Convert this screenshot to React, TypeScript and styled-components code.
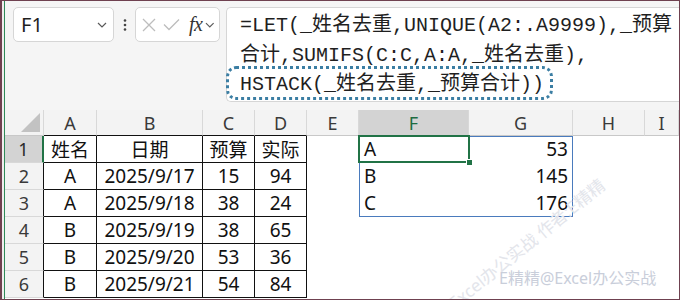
import React from "react";
import styled, { createGlobalStyle } from "styled-components";

const Global = createGlobalStyle`
  html, body { margin: 0; padding: 0; background: #ffffff; }
  body { width: 680px; height: 300px; overflow: hidden; }
`;

const Frame = styled.div`
  position: relative;
  box-sizing: border-box;
  width: 680px;
  height: 300px;
  border: 1px solid #6f4150;
  border-left-width: 2px;
  background: #efeded;
  display: flex;
  overflow: hidden;
`;

const Inner = styled.div`
  margin-left: 2px;
  border-left: 1px solid #2f8a58;
  flex: 1;
  min-width: 0;
  display: flex;
  flex-direction: column;
  background: #ffffff;
`;

const FormulaBar = styled.div`
  box-sizing: border-box;
  height: 109px;
  background: #f5f5f5;
  display: flex;
  align-items: flex-start;
  padding: 6px 0 0 8px;
`;

const Pill = styled.div<{ $w: number }>`
  box-sizing: border-box;
  width: ${(p) => p.$w}px;
  height: 35px;
  background: #ffffff;
  border: 1px solid #d6d6d6;
  border-radius: 5px;
  display: flex;
  align-items: center;
`;

const NameText = styled.span`
  font-family: "Noto Sans", sans-serif;
  font-size: 20px;
  color: #1f1f1f;
  margin-left: 7px;
  flex: 1;
`;

const Chevron = styled.svg<{ $mr: number }>`
  width: 10px;
  height: 6px;
  margin-right: ${(p) => p.$mr}px;
`;

const Dots = styled.div`
  width: 21px;
  height: 35px;
  display: flex;
  align-items: center;
  justify-content: center;
`;

const FxIcon = styled.svg<{ $ml: number }>`
  margin-left: ${(p) => p.$ml}px;
  flex: none;
`;

const FxText = styled.span`
  font-family: "Liberation Serif", serif;
  font-style: italic;
  font-size: 20px;
  color: #333;
  margin-left: 9px;
  margin-right: 3px;
  letter-spacing: -0.5px;
`;

const FormulaBox = styled.div`
  box-sizing: border-box;
  margin-left: 6px;
  flex: 1;
  height: 95px;
  background: #ffffff;
  border: 1px solid #d6d6d6;
  border-right: none;
  border-radius: 5px 0 0 5px;
  padding: 3px 0 0 13px;
  font-family: "Liberation Mono", "Noto Sans CJK SC", monospace;
  font-size: 20px;
  color: #1f1f1f;
  white-space: pre;
`;

const FLine = styled.div`
  height: 30px;
  line-height: 30px;
`;

const Highlight = styled.div`
  box-sizing: border-box;
  display: inline-block;
  height: 34px;
  line-height: 30px;
  margin: -5px 0 0 -14px;
  padding: 1px 6px 0 11px;
  border: 3px dotted #3b7ea3;
  border-radius: 10px;
`;

const Sheet = styled.div`
  display: grid;
  grid-template-columns: 39px 53px 106px 52px 52px 52px 110px 104px 72px 1fr;
  grid-template-rows: 26px repeat(6, 27px);
  font-family: "Noto Sans", "Noto Sans CJK SC", sans-serif;
`;

const Corner = styled.div`
  grid-row: 1;
  grid-column: 1;
  position: relative;
  box-sizing: border-box;
  background: #f3f3f3;
  border-right: 1px solid #d8d8d8;
  border-bottom: 1px solid #c8c8c8;
  &::after {
    content: "";
    position: absolute;
    right: 3px;
    bottom: 3px;
    width: 0;
    height: 0;
    border-left: 19px solid transparent;
    border-bottom: 19px solid #c2c2c2;
  }
`;

const ColHead = styled.div<{ $col: number; $sel?: boolean; $line: string }>`
  grid-row: 1;
  grid-column: ${(p) => p.$col};
  box-sizing: border-box;
  background: ${(p) => (p.$sel ? "#d3d3d3" : "#f3f3f3")};
  color: ${(p) => (p.$sel ? "#1e6b41" : "#3a3a3a")};
  border-right: 1px solid #d8d8d8;
  border-bottom: 1px solid ${(p) => p.$line};
  font-size: 18px;
  display: flex;
  align-items: center;
  justify-content: center;
`;

const RowHead = styled.div<{ $row: number; $sel?: boolean; $line: string }>`
  grid-row: ${(p) => p.$row};
  grid-column: 1;
  box-sizing: border-box;
  background: ${(p) => (p.$sel ? "#d3d3d3" : "#f3f3f3")};
  color: ${(p) => (p.$sel ? "#2a2a2a" : "#3a3a3a")};
  border-right: ${(p) => (p.$sel ? 2 : 1)}px solid ${(p) => p.$line};
  border-bottom: 1px solid #d8d8d8;
  font-size: 18px;
  display: flex;
  align-items: center;
  justify-content: center;
`;

const Cell = styled.div<{
  $row: number;
  $col: number;
  $box?: boolean;
  $align?: "left" | "center" | "right";
}>`
  grid-row: ${(p) => p.$row};
  grid-column: ${(p) => p.$col};
  box-sizing: border-box;
  background: #ffffff;
  color: #111;
  font-size: 19px;
  border-right: 1px solid ${(p) => (p.$box ? "#111" : "transparent")};
  border-bottom: 1px solid ${(p) => (p.$box ? "#111" : "transparent")};
  display: flex;
  align-items: center;
  justify-content: ${(p) =>
    p.$align === "left" ? "flex-start" : p.$align === "right" ? "flex-end" : "center"};
  padding: 0 ${(p) => (p.$align === "right" ? 4 : 0)}px 0 ${(p) => (p.$align === "left" ? 5 : 0)}px;
  white-space: nowrap;
`;

const SpillBorder = styled.div`
  grid-column: 7 / 9;
  grid-row: 2 / 5;
  border: 1px solid #4a7bbd;
  pointer-events: none;
  z-index: 1;
`;

const Selection = styled.div`
  grid-column: 7 / 8;
  grid-row: 2 / 3;
  margin: -1px -1px 0 -1px;
  border: 2px solid #217346;
  position: relative;
  pointer-events: none;
  z-index: 2;
`;

const FillHandle = styled.div`
  position: absolute;
  right: -5px;
  bottom: -5px;
  width: 5px;
  height: 5px;
  background: #217346;
  border: 1px solid #ffffff;
`;

const Watermark = styled.div`
  position: absolute;
  left: 497px;
  top: 264px;
  font-family: "Noto Sans", "Noto Sans CJK SC", sans-serif;
  font-size: 16px;
  color: #c9ceda;
  white-space: nowrap;
  pointer-events: none;
  z-index: 3;
`;

const DiagonalMark = styled.div`
  position: absolute;
  left: 524px;
  top: 242px;
  transform: translate(-50%, -50%) rotate(-39deg);
  font-family: "Noto Sans", "Noto Sans CJK SC", sans-serif;
  font-size: 17px;
  color: #e3e5eb;
  white-space: nowrap;
  pointer-events: none;
  z-index: 3;
`;

const cols = ["A", "B", "C", "D", "E", "F", "G", "H", "I"];
const table: string[][] = [
  ["姓名", "日期", "预算", "实际"],
  ["A", "2025/9/17", "15", "94"],
  ["A", "2025/9/18", "38", "24"],
  ["B", "2025/9/19", "38", "65"],
  ["B", "2025/9/20", "53", "36"],
  ["B", "2025/9/21", "54", "84"],
];
const spill: string[][] = [
  ["A", "53"],
  ["B", "145"],
  ["C", "176"],
];

const ChevronDown = ({ mr }: { mr: number }) => (
  <Chevron $mr={mr} viewBox="0 0 10 6">
    <path d="M1 1 L5 5 L9 1" fill="none" stroke="#5a5a5a" strokeWidth="1.2" />
  </Chevron>
);

export default function App() {
  return (
    <>
      <Global />
      <Frame>
        <Inner>
          <FormulaBar>
            <Pill $w={101}>
              <NameText>F1</NameText>
              <ChevronDown mr={6} />
            </Pill>
            <Dots>
              <svg width="4" height="12" viewBox="0 0 4 12">
                <circle cx="2" cy="1.5" r="1.3" fill="#444" />
                <circle cx="2" cy="6" r="1.3" fill="#444" />
                <circle cx="2" cy="10.5" r="1.3" fill="#444" />
              </svg>
            </Dots>
            <Pill $w={85}>
              <FxIcon $ml={6} width="14" height="14" viewBox="0 0 14 14">
                <path d="M1 1 L13 13 M13 1 L1 13" stroke="#bdbdbd" strokeWidth="1.3" fill="none" />
              </FxIcon>
              <FxIcon $ml={7} width="17" height="13" viewBox="0 0 17 13">
                <path d="M1 6.5 L6 11.5 L16 1.5" stroke="#bdbdbd" strokeWidth="1.3" fill="none" />
              </FxIcon>
              <FxText>fx</FxText>
              <ChevronDown mr={4} />
            </Pill>
            <FormulaBox>
              <FLine>=LET(_姓名去重,UNIQUE(A2:.A9999),_预算</FLine>
              <FLine>合计,SUMIFS(C:C,A:A,_姓名去重),</FLine>
              <Highlight>HSTACK(_姓名去重,_预算合计))</Highlight>
            </FormulaBox>
          </FormulaBar>
          <Sheet>
            <Corner />
            {cols.map((c, i) => (
              <ColHead
                key={c}
                $col={i + 2}
                $sel={c === "F"}
                $line={i < 4 ? "#111" : c === "F" ? "#217346" : "#c8c8c8"}
              >
                {c}
              </ColHead>
            ))}
            {table.map((row, r) => (
              <React.Fragment key={r}>
                <RowHead $row={r + 2} $sel={r === 0} $line={r === 0 ? "#217346" : "#111"}>
                  {r + 1}
                </RowHead>
                {row.map((v, c) => (
                  <Cell key={c} $row={r + 2} $col={c + 2} $box>
                    {v}
                  </Cell>
                ))}
                <Cell $row={r + 2} $col={6} />
                <Cell $row={r + 2} $col={7} $align="left">
                  {spill[r] ? spill[r][0] : ""}
                </Cell>
                <Cell $row={r + 2} $col={8} $align="right">
                  {spill[r] ? spill[r][1] : ""}
                </Cell>
                <Cell $row={r + 2} $col={9} />
                <Cell $row={r + 2} $col={10} />
              </React.Fragment>
            ))}
            <SpillBorder />
            <Selection>
              <FillHandle />
            </Selection>
          </Sheet>
        </Inner>
        <DiagonalMark>Excel办公实战 作者:E精精</DiagonalMark>
        <Watermark>E精精@Excel办公实战</Watermark>
      </Frame>
    </>
  );
}
